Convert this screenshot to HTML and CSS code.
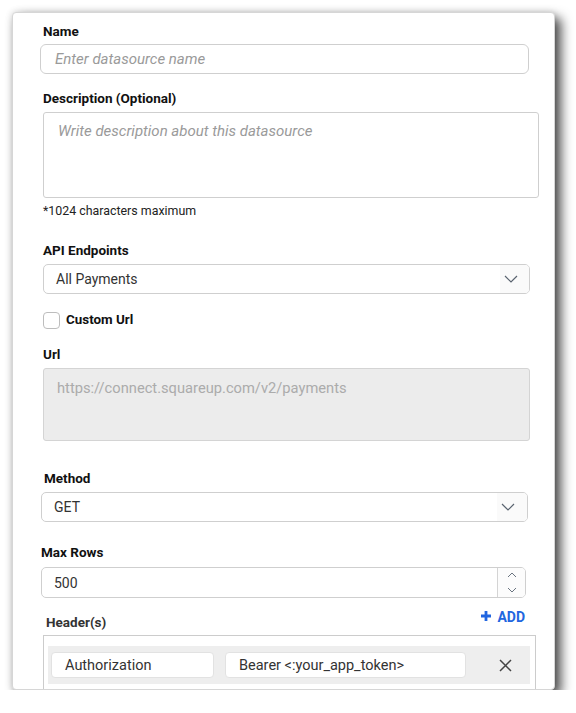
FILE: index.html
```html
<!DOCTYPE html>
<html>
<head>
<meta charset="utf-8">
<link rel="stylesheet" href="styles.css">
</head>
<body>
<div class="card">
  <form class="form">
    <label class="label">Name</label>
    <div class="field field-name"><span class="placeholder">Enter datasource name</span></div>

    <label class="label label-desc">Description (Optional)</label>
    <div class="textarea"><span class="placeholder">Write description about this datasource</span></div>
    <div class="hint">*1024 characters maximum</div>

    <label class="label label-api">API Endpoints</label>
    <div class="select select-api">
      <span class="value">All Payments</span>
      <span class="caret">
        <svg width="14" height="8" viewBox="0 0 14 8"><path d="M1 1 L7 7 L13 1" fill="none" stroke="#5a6470" stroke-width="1.2"/></svg>
      </span>
    </div>

    <div class="check-row">
      <span class="checkbox"></span>
      <span class="check-label">Custom Url</span>
    </div>

    <label class="label label-url">Url</label>
    <div class="url-box">https://connect.squareup.com/v2/payments</div>

    <label class="label label-method">Method</label>
    <div class="select select-method">
      <span class="value">GET</span>
      <span class="caret">
        <svg width="14" height="8" viewBox="0 0 14 8"><path d="M1 1 L7 7 L13 1" fill="none" stroke="#5a6470" stroke-width="1.2"/></svg>
      </span>
    </div>

    <label class="label label-rows">Max Rows</label>
    <div class="number">
      <span class="value">500</span>
      <span class="spinner">
        <svg width="10" height="6" viewBox="0 0 10 6"><path d="M1 5 L5 1 L9 5" fill="none" stroke="#6a7480" stroke-width="1"/></svg>
        <svg width="10" height="6" viewBox="0 0 10 6"><path d="M1 1 L5 5 L9 1" fill="none" stroke="#6a7480" stroke-width="1"/></svg>
      </span>
    </div>

    <div class="headers-head">
      <span class="headers-label">Header(s)</span>
      <span class="add">
        <svg width="10" height="10" viewBox="0 0 10 10"><path d="M5 0 V10 M0 5 H10" stroke="#2266e0" stroke-width="2.8"/></svg>
        ADD
      </span>
    </div>
    <div class="headers-box">
      <div class="header-row">
        <div class="hfield hfield-key">Authorization</div>
        <div class="hfield hfield-val">Bearer &lt;:your_app_token&gt;</div>
        <span class="remove">
          <svg width="13" height="13" viewBox="0 0 13 13"><path d="M1 1 L12 12 M12 1 L1 12" stroke="#444" stroke-width="1.5"/></svg>
        </span>
      </div>
      <div class="header-row header-row-next"></div>
    </div>
  </form>
</div>
</body>
</html>
```

FILE: styles.css
```css
html, body {
  margin: 0;
  padding: 0;
  background: #ffffff;
}

body {
  font-family: Roboto, "Liberation Sans", sans-serif;
  color: #222;
  padding-top: 12px;
  padding-left: 12px;
}

.card {
  width: 543px;
  height: 678px;
  box-sizing: border-box;
  border: 1px solid #d6d6d6;
  border-radius: 4px;
  background: #fff;
  overflow: hidden;
  box-shadow: 6px 6px 12px rgba(0, 0, 0, 0.7), 0 0 7px rgba(0, 0, 0, 0.15);
}

.form {
  display: flex;
  flex-direction: column;
  align-items: flex-start;
  padding: 10px 0 0 30px;
  margin: 0;
}

.label {
  display: block;
  font-size: 13.5px;
  line-height: 16px;
  font-weight: 700;
  color: #111;
}

.placeholder {
  font-style: italic;
  font-size: 15px;
  color: #9a9a9a;
}

.field {
  box-sizing: border-box;
  height: 30px;
  border: 1px solid #cfcfcf;
  border-radius: 6px;
  display: flex;
  align-items: center;
  font-size: 15px;
  padding-left: 14px;
}

.field-name {
  width: 489px;
  margin: 5px 0 0 -3px;
}

.label-desc { margin-top: 16px; }

.textarea {
  box-sizing: border-box;
  width: 496px;
  height: 86px;
  margin-top: 6px;
  border: 1px solid #cfcfcf;
  border-radius: 3px;
  padding: 10px 0 0 14px;
  font-size: 15px;
  line-height: 16px;
}

.hint {
  margin-top: 6px;
  font-size: 12.4px;
  line-height: 14px;
  color: #222;
}

.label-api { margin-top: 24px; }

.select {
  box-sizing: border-box;
  width: 487px;
  height: 30px;
  border: 1px solid #cfcfcf;
  border-radius: 5px;
  display: flex;
  align-items: stretch;
  font-size: 14px;
  color: #333;
  margin-top: 6px;
  overflow: hidden;
}

.select .value {
  flex: 1;
  display: flex;
  align-items: center;
  padding-left: 12px;
}

.caret {
  width: 25px;
  background: #fafafa;
  display: flex;
  align-items: center;
  justify-content: flex-start;
  padding-left: 4px;
}

.check-row {
  display: flex;
  align-items: center;
  gap: 6px;
  margin-top: 18px;
}

.checkbox {
  box-sizing: border-box;
  width: 17px;
  height: 17px;
  border: 1px solid #bdbdbd;
  border-radius: 4px;
  background: #fff;
}

.check-label {
  font-size: 13.4px;
  font-weight: 700;
  line-height: 16px;
  color: #111;
  margin-top: -2px;
}

.label-url { margin-top: 17px; }

.url-box {
  box-sizing: border-box;
  width: 487px;
  height: 73px;
  margin-top: 6px;
  border: 1px solid #d4d4d4;
  border-radius: 3px;
  background: #ececec;
  color: #ababab;
  font-size: 14.7px;
  line-height: 16px;
  padding: 11px 0 0 13px;
}

.label-method {
  margin-top: 29px;
  margin-left: 1px;
}

.select-method {
  margin-left: -2px;
}

.select-method .caret {
  width: 26px;
}

.label-rows {
  margin-top: 22px;
  margin-left: -2px;
}

.number {
  box-sizing: border-box;
  width: 485px;
  height: 31px;
  margin: 7px 0 0 -2px;
  border: 1px solid #cfcfcf;
  border-radius: 5px;
  display: flex;
  align-items: stretch;
  font-size: 14px;
  color: #333;
  overflow: hidden;
}

.number .value {
  flex: 1;
  display: flex;
  align-items: center;
  padding-left: 12px;
}

.spinner {
  width: 27px;
  border-left: 1px solid #d4d4d4;
  background: #fcfcfc;
  display: flex;
  flex-direction: column;
  align-items: center;
  justify-content: center;
  gap: 9px;
}

.headers-head {
  width: 479px;
  margin: 14px 0 0 3px;
  display: flex;
  justify-content: space-between;
  align-items: flex-start;
}

.headers-label {
  font-size: 13.5px;
  line-height: 16px;
  font-weight: 700;
  color: #333;
  margin-top: 2px;
}

.add {
  display: flex;
  align-items: center;
  gap: 6px;
  font-size: 14px;
  font-weight: 700;
  line-height: 16px;
  color: #2266e0;
  margin-top: -3px;
}

.add svg {
  margin-top: -3px;
}

.headers-box {
  box-sizing: border-box;
  width: 493px;
  margin-top: 5px;
  border: 1px solid #cccccc;
  padding: 10px 5px 10px 4px;
}

.header-row {
  height: 38px;
  box-sizing: border-box;
  background: #eeeeee;
  display: flex;
  align-items: center;
  padding-left: 3px;
  gap: 11px;
}

.header-row-next {
  margin-top: 10px;
}

.hfield {
  box-sizing: border-box;
  height: 26px;
  background: #fff;
  border: 1px solid #e2e2e2;
  border-radius: 4px;
  display: flex;
  align-items: center;
  padding-left: 13px;
  font-size: 14.5px;
  color: #333;
}

.hfield-key { width: 163px; }
.hfield-val { width: 241px; }

.remove {
  margin-left: 22px;
  display: flex;
  align-items: center;
}
```
